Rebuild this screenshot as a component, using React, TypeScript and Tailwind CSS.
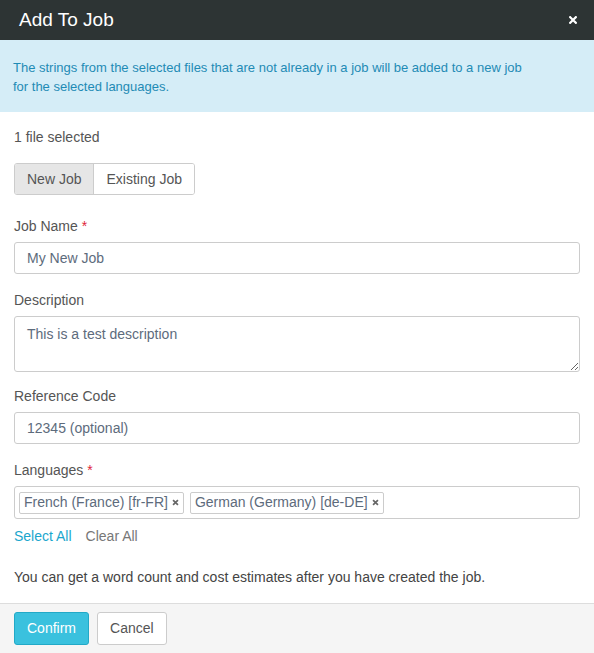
export default function App() {
  const font = { fontFamily: '"Liberation Sans", Arial, sans-serif' };
  return (
    <div className="w-[594px] h-[653px] bg-white flex flex-col text-[14px] text-[#555]" style={font}>
      <div className="h-[40px] bg-[#2d3434] flex items-center justify-between pl-[19px] pr-[17px] shrink-0">
        <h1 className="text-white text-[19px]">Add To Job</h1>
        <svg width="8" height="8" viewBox="0 0 10 10" className="text-white">
          <path d="M1.5 1.5 L8.5 8.5 M8.5 1.5 L1.5 8.5" stroke="currentColor" strokeWidth="2.8" strokeLinecap="square" />
        </svg>
      </div>

      <div className="h-[72px] bg-[#d5edf7] text-[#1f8bb5] pl-[13px] pr-[57px] pt-[18px] leading-[19px] text-[13px] shrink-0">
        The strings from the selected files that are not already in a job will be added to a new job for the selected languages.
      </div>

      <div className="flex-1 px-[14px] pt-[15px]">
        <p className="leading-[20px]">1 file selected</p>

        <div className="mt-[16px] inline-flex h-[32px] border border-[#ccc] rounded-[3px] overflow-hidden">
          <button className="px-[12px] bg-[#e6e6e6] text-[#555] border-r border-[#ccc]">New Job</button>
          <button className="px-[12px] bg-white text-[#555]">Existing Job</button>
        </div>

        <label className="block mt-[21px] leading-[20px]">
          Job Name <span className="text-[#e0243b]">*</span>
        </label>
        <input
          className="mt-[6px] block w-full h-[32px] border border-[#ccc] rounded-[3px] px-[12px] text-[#5d6b7c] outline-none"
          defaultValue="My New Job"
        />

        <label className="block mt-[16px] leading-[20px]">Description</label>
        <textarea
          className="mt-[6px] block w-full h-[56px] border border-[#ccc] rounded-[3px] px-[12px] py-[7px] text-[#5d6b7c] outline-none leading-[20px]"
          defaultValue="This is a test description"
        />

        <label className="block mt-[14px] leading-[20px]">Reference Code</label>
        <input
          className="mt-[6px] block w-full h-[32px] border border-[#ccc] rounded-[3px] px-[12px] text-[#5d6b7c] outline-none placeholder:text-[#5d6b7c]"
          placeholder="12345 (optional)"
        />

        <label className="block mt-[16px] leading-[20px]">
          Languages <span className="text-[#e0243b]">*</span>
        </label>
        <div className="mt-[6px] h-[33px] border border-[#ccc] rounded-[3px] flex items-center gap-[6px] px-[4px]">
          {["French (France) [fr-FR]", "German (Germany) [de-DE]"].map((l) => (
            <span key={l} className="h-[22px] border border-[#ccc] rounded-[2px] px-[4px] flex items-center gap-[4px] text-[#5d6b7c]">
              {l}
              <svg width="7" height="7" viewBox="0 0 10 10">
                <path d="M1.5 1.5 L8.5 8.5 M8.5 1.5 L1.5 8.5" stroke="#666" strokeWidth="2.4" />
              </svg>
            </span>
          ))}
        </div>

        <div className="mt-[7px] flex gap-[14px] leading-[20px]">
          <a className="text-[#1aa6cd]">Select All</a>
          <a className="text-[#777]">Clear All</a>
        </div>

        <p className="mt-[21px] leading-[20px] text-[#444]">
          You can get a word count and cost estimates after you have created the job.
        </p>
      </div>

      <div className="h-[50px] bg-[#f5f5f5] border-t border-[#ddd] flex items-center gap-[8px] px-[14px] shrink-0">
        <button className="h-[33px] px-[12px] bg-[#3ac1de] border border-[#22a9c7] rounded-[3px] text-white">Confirm</button>
        <button className="h-[33px] px-[12px] bg-white border border-[#ccc] rounded-[3px] text-[#555]">Cancel</button>
      </div>
    </div>
  );
}
